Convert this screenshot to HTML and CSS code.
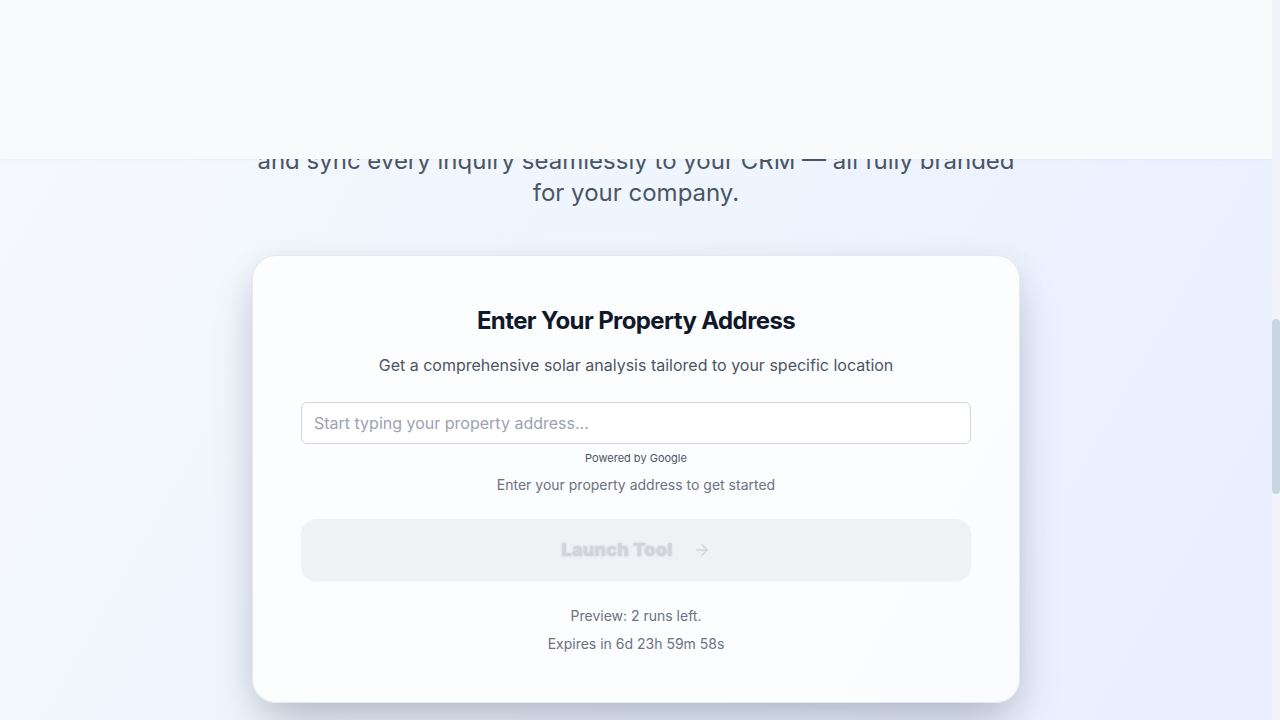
FILE: index.html
```html
<!DOCTYPE html>
<html lang="en">
<head>
<meta charset="utf-8">
<title>Solar Tool</title>
<link rel="stylesheet" href="styles.css">
</head>
<body>
<div class="page">
  <main class="main">
    <p class="hero-text">Capture qualified solar leads with instant estimates,<br>and sync every inquiry seamlessly to your CRM — all fully branded for your company.</p>
    <section class="card">
      <h2 class="card-title">Enter Your Property Address</h2>
      <p class="card-sub">Get a comprehensive solar analysis tailored to your specific location</p>
      <input class="address" type="text" placeholder="Start typing your property address...">
      <p class="powered">Powered by Google</p>
      <p class="hint">Enter your property address to get started</p>
      <button class="launch" type="button" disabled>
        <span class="launch-label">Launch Tool</span>
        <svg class="launch-icon" viewBox="0 0 24 24" width="18" height="18" fill="none" stroke="currentColor" stroke-width="2" stroke-linecap="round" stroke-linejoin="round"><path d="M5 12h14"/><path d="m12 5 7 7-7 7"/></svg>
      </button>
      <p class="meta">Preview: 2 runs left.</p>
      <p class="meta">Expires in 6d 23h 59m 58s</p>
    </section>
  </main>
</div>
<header class="topbar"></header>
<div class="scrolltrack"><div class="scrollthumb"></div></div>
</body>
</html>
```
FILE: styles.css
```css
* { box-sizing: border-box; }
html, body { margin: 0; padding: 0; height: 100%; overflow: hidden; }
body {
  font-family: Inter, "Noto Sans", "Liberation Sans", sans-serif;
  background: linear-gradient(120deg, #f6f8fc 0%, #eef5ff 50%, #e8eefe 100%);
  color: #111827;
}
.page {
  width: calc(100% - 8px);
  height: 100%;
}
.main {
  display: flex;
  flex-direction: column;
  align-items: center;
  padding-top: 113px;
}
.hero-text {
  width: 768px;
  margin: 0;
  text-align: center;
  font-size: 24px;
  line-height: 32px;
  color: #4b5563;
  padding: 0;
}
.card {
  width: 768px;
  margin-top: 46px;
  padding: 49px 48px 48px;
  background: rgba(255, 255, 255, 0.8);
  border: 1px solid rgba(226, 232, 240, 0.9);
  border-radius: 24px;
  box-shadow: 0 25px 50px -12px rgba(15, 23, 42, 0.25), 0 8px 32px rgba(15, 23, 42, 0.07);
  display: flex;
  flex-direction: column;
  align-items: stretch;
  text-align: center;
}
.card-title {
  margin: 0;
  font-size: 24px;
  line-height: 32px;
  font-weight: 700;
  color: #111827;
  letter-spacing: -0.6px;
}
.card-sub {
  margin: 16px 0 0;
  font-size: 16px;
  line-height: 24px;
  color: #4b5563;
}
.address {
  margin-top: 25px;
  height: 42px;
  width: 100%;
  border: 1px solid #d1d5db;
  border-radius: 6px;
  background: #fff;
  padding: 0 12px;
  font-family: inherit;
  font-size: 16px;
  color: #111827;
}
.address::placeholder { color: #9ca3af; }
.powered {
  margin: 6px 0 0;
  font-size: 11px;
  line-height: 16px;
  color: #4b5563;
}
.hint {
  margin: 9px 0 0;
  font-size: 14px;
  line-height: 20px;
  color: #6b7280;
}
.launch {
  margin-top: 24px;
  height: 62px;
  width: 100%;
  border: none;
  border-radius: 16px;
  background: #eff1f4;
  box-shadow: 0 1px 3px rgba(15, 23, 42, 0.04);
  display: flex;
  align-items: center;
  justify-content: center;
  gap: 20px;
  font-family: inherit;
  color: #d1d5db;
  cursor: not-allowed;
}
.launch-label {
  font-size: 18px;
  font-weight: 800;
  line-height: 28px;
  letter-spacing: 0.3px;
  color: #d1d5db;
  text-shadow: 0 0 2px rgba(156, 163, 175, 0.5);
}
.launch-icon { color: #d1d5db; }
.meta {
  margin: 8px 0 0;
  font-size: 14px;
  line-height: 20px;
  color: #6b7280;
}
.launch + .meta { margin-top: 25px; }
.topbar {
  position: fixed;
  top: 0;
  left: 0;
  right: 8px;
  height: 159px;
  background: #f8fafc;
  box-shadow: 0 1px 2px rgba(15, 23, 42, 0.03);
}
.scrolltrack {
  position: fixed;
  top: 0;
  right: 0;
  width: 8px;
  height: 100%;
  background: #f1f5f9;
}
.scrollthumb {
  position: absolute;
  top: 319px;
  left: 0;
  width: 8px;
  height: 175px;
  border-radius: 4px;
  background: #cbd5e1;
}
```
